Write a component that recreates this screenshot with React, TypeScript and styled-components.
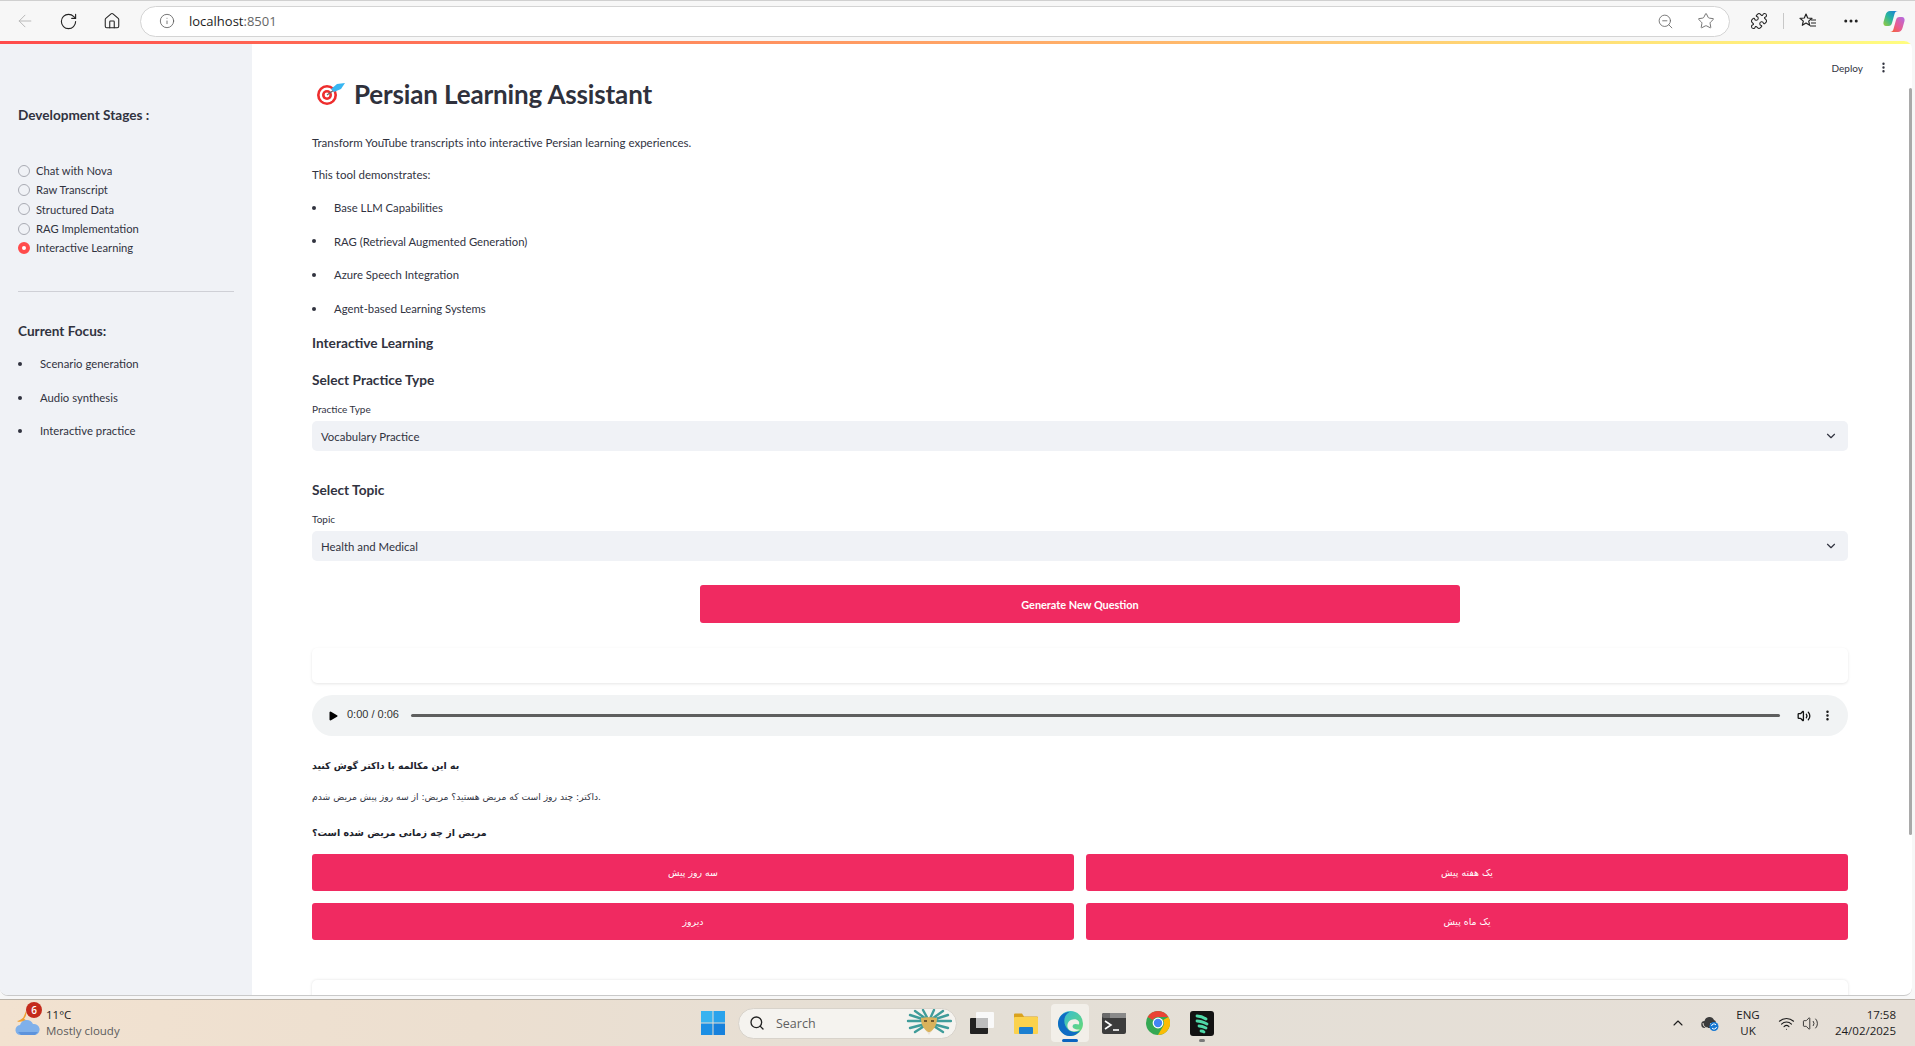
import React from 'react'
import styled, { createGlobalStyle } from 'styled-components'
import {
  ArrowLeft,
  RotateCw,
  Home,
  Info,
  ZoomOut,
  Star,
  Puzzle,
  MoreHorizontal,
  ChevronDown,
  ChevronUp,
  Search,
  Wifi,
  Volume2,
  Play,
  MoreVertical,
} from 'lucide-react'

const uiFont = `Lato, "Noto Sans", sans-serif`
const winFont = `"Open Sans", "Noto Sans", sans-serif`
const faFont = `"DejaVu Sans", "Noto Sans", sans-serif`
const pink = '#f02a61'

const Global = createGlobalStyle`
  html, body { margin: 0; padding: 0; height: 100%; overflow: hidden; }
  body { font-family: ${uiFont}; background: #f7f7f7; }
  * { box-sizing: border-box; }
`

const Page = styled.div`
  width: 1915px;
  height: 1046px;
  display: flex;
  flex-direction: column;
  overflow: hidden;
  background: #f7f7f7;
`

const Chrome = styled.div`
  height: 41px;
  flex: none;
  display: flex;
  align-items: center;
  border-top: 1px solid #d0d0d0;
  padding-left: 15px;
  color: #222;
`

const NavBtn = styled.div<{ $w?: number; $left?: number }>`
  width: ${(p) => p.$w || 44}px;
  margin-left: ${(p) => p.$left || 0}px;
  display: flex;
  align-items: center;
  justify-content: flex-start;
  flex: none;
`

const Address = styled.div`
  width: 1590px;
  height: 31px;
  flex: none;
  display: flex;
  align-items: center;
  background: #fff;
  border: 1px solid #d4d4d4;
  border-radius: 16px;
  padding: 0 14px 0 18px;
  font-family: ${winFont};
  font-size: 13px;
`

const Host = styled.span`
  margin-left: 14px;
  color: #1c1c1c;
  b { font-weight: 400; color: #666; }
`

const AddressEnd = styled.div`
  margin-left: auto;
  display: flex;
  gap: 23px;
  align-items: center;
  color: #666;
`

const ToolGroup = styled.div`
  display: flex;
  align-items: center;
  margin-left: 20px;
  flex: 1;
`

const ToolSep = styled.div`
  width: 1px;
  height: 16px;
  background: #c8c8c8;
  margin: 0 15px 0 15px;
`

const Viewport = styled.div`
  flex: none;
  height: 955px;
  margin-right: 3px;
  position: relative;
  background: #fff;
  border-radius: 0 8px 8px 8px;
  border-bottom: 1px solid #c9c9c9;
  overflow: hidden;
  display: flex;
  flex-direction: column;
`

const Decoration = styled.div`
  height: 3px;
  flex: none;
  background: linear-gradient(90deg, #ff4b4b, #fffd80);
`

const Body = styled.div`
  flex: 1;
  min-height: 0;
  display: flex;
`

const Sidebar = styled.aside`
  width: 252px;
  flex: none;
  background: #f0f2f6;
  padding: 61px 18px 0 18px;
  color: #31333f;
`

const SideTitle = styled.div<{ $after: number }>`
  font-size: 13.6px;
  font-weight: 700;
  line-height: 20px;
  margin-bottom: ${(p) => p.$after}px;
`

const RadioList = styled.div`
  display: flex;
  flex-direction: column;
`

const RadioRow = styled.div`
  height: 19.3px;
  display: flex;
  align-items: center;
  gap: 6px;
  font-size: 11.2px;
`

const RadioDot = styled.span<{ $on?: boolean }>`
  width: 12px;
  height: 12px;
  border-radius: 50%;
  flex: none;
  background: ${(p) => (p.$on ? '#fff' : '#f0f2f6')};
  border: ${(p) => (p.$on ? '4px solid #ff4b4b' : '1px solid #a9abb3')};
`

const SideRule = styled.hr`
  border: 0;
  border-top: 1px solid #cfd0d6;
  margin: 34px 0 29px;
`

const SideList = styled.ul`
  list-style: none;
  margin: 0;
  padding: 0;
`

const Bullet = styled.li<{ $pad: number; $h: number }>`
  position: relative;
  padding-left: ${(p) => p.$pad}px;
  height: ${(p) => p.$h}px;
  line-height: ${(p) => p.$h}px;
  font-size: 11.3px;
  &::before {
    content: '';
    position: absolute;
    left: 0;
    top: 50%;
    width: 4px;
    height: 4px;
    margin-top: -2px;
    background: #31333f;
    border-radius: 50%;
  }
`

const Main = styled.main`
  flex: 1;
  min-width: 0;
  position: relative;
  padding: 0 64px 0 60px;
  color: #31333f;
  overflow: hidden;
`

const Header = styled.div`
  position: absolute;
  top: 17px;
  right: 22px;
  display: flex;
  align-items: center;
  gap: 14px;
  font-size: 10px;
  color: #31333f;
`

const ScrollThumb = styled.div`
  position: absolute;
  right: 0;
  top: 44px;
  width: 3px;
  height: 747px;
  background: #a9a9a9;
  border-radius: 2px;
`

const TitleRow = styled.div`
  display: flex;
  align-items: center;
  gap: 9px;
  height: 32px;
  margin-top: 34px;
  padding-left: 5px;
`

const Title = styled.h1`
  margin: 0;
  font-size: 26px;
  font-weight: 700;
  line-height: 32px;
  letter-spacing: -0.15px;
  color: #2f313c;
`

const Para = styled.p<{ $top: number }>`
  margin: ${(p) => p.$top}px 0 0;
  font-size: 11.5px;
  line-height: 18px;
`

const MainList = styled.ul`
  list-style: none;
  margin: 7px 0 0;
  padding: 0;
`

const H3 = styled.h3<{ $top: number }>`
  margin: ${(p) => p.$top}px 0 0;
  font-size: 13.7px;
  font-weight: 700;
  line-height: 20px;
`

const FieldLabel = styled.div<{ $top: number }>`
  margin-top: ${(p) => p.$top}px;
  font-size: 10px;
  line-height: 13px;
  color: #31333f;
`

const Select = styled.div`
  height: 30px;
  margin-top: 5px;
  background: #f0f2f6;
  border-radius: 5px;
  padding: 0 10px 0 9px;
  display: flex;
  align-items: center;
  justify-content: space-between;
  font-size: 11.4px;
`

const CenterRow = styled.div`
  display: flex;
  justify-content: center;
  margin-top: 24px;
`

const PrimaryBtn = styled.div`
  width: 760px;
  height: 38px;
  background: ${pink};
  color: #fff;
  border-radius: 3px;
  display: flex;
  align-items: center;
  justify-content: center;
  font-size: 10.9px;
  font-weight: 700;
`

const Card = styled.div<{ $top: number }>`
  height: 35px;
  margin-top: ${(p) => p.$top}px;
  background: #fff;
  border-radius: 5px;
  box-shadow: 0 1px 3px rgba(0, 0, 0, 0.1);
`

const Audio = styled.div`
  height: 41px;
  margin-top: 12px;
  background: #f1f3f4;
  border-radius: 21px;
  display: flex;
  align-items: center;
  padding: 0 14px 0 15px;
  color: #111;
`

const AudioTime = styled.span`
  font-family: "Liberation Sans", sans-serif;
  font-size: 11px;
  color: #333;
  margin: 0 12px 3px 8px;
  white-space: nowrap;
`

const Track = styled.div`
  flex: 1;
  height: 3px;
  background: #5e5e5e;
  border-radius: 2px;
  margin: 0 17px 1px 0;
`

const FaLine = styled.p<{ $top: number; $bold?: boolean; $size: number }>`
  direction: ltr;
  margin: ${(p) => p.$top}px 0 0;
  font-family: ${faFont};
  font-size: ${(p) => p.$size}px;
  font-weight: ${(p) => (p.$bold ? 700 : 400)};
  line-height: 18px;
  color: ${(p) => (p.$bold ? '#20222c' : '#31333f')};
`

const Answers = styled.div`
  display: grid;
  grid-template-columns: 1fr 1fr;
  gap: 12px;
  margin-top: 12px;
`

const AnswerBtn = styled.div`
  height: 37px;
  background: ${pink};
  color: #fff;
  border-radius: 3px;
  display: flex;
  align-items: center;
  justify-content: center;
  font-family: ${faFont};
  font-size: 9.4px;
`

const CutCard = styled.div`
  height: 40px;
  margin-top: 40px;
  background: #fff;
  border-radius: 5px 5px 0 0;
  box-shadow: 0 0 3px rgba(0, 0, 0, 0.12);
`

const Taskbar = styled.footer`
  flex: none;
  height: 47px;
  margin-top: 3px;
  border-top: 1px solid #b9b2a8;
  background: linear-gradient(90deg, #f2e2d0 0%, #ecdfd0 25%, #e4dfd6 50%, #e6dfd7 100%);
  display: flex;
  align-items: center;
  font-family: ${winFont};
  color: #1c1c1c;
`

const WeatherBox = styled.div`
  width: 701px;
  flex: none;
  padding-left: 15px;
  display: flex;
  align-items: center;
  gap: 6px;
  position: relative;
`

const Badge = styled.span`
  position: absolute;
  left: 26px;
  top: -5px;
  width: 16px;
  height: 16px;
  border-radius: 50%;
  background: #c42b1c;
  color: #fff;
  font-size: 10px;
  font-weight: 600;
  display: flex;
  align-items: center;
  justify-content: center;
`

const WeatherText = styled.div`
  font-size: 11.5px;
  line-height: 16.5px;
  span { display: block; color: #5c5c5c; }
`

const Center = styled.div`
  display: flex;
  align-items: center;
`

const SearchPill = styled.div`
  width: 219px;
  height: 31px;
  margin: 0 3px 0 13px;
  background: #f5f3ef;
  border: 1px solid #d8d3cb;
  border-radius: 16px;
  display: flex;
  align-items: center;
  gap: 11px;
  padding: 0 4px 0 10px;
  font-size: 12.5px;
  color: #5f5f5f;
`

const Mask = styled.span`
  margin-left: auto;
  display: flex;
`

const TaskIcon = styled.div<{ $active?: boolean; $mark?: string }>`
  width: 38px;
  height: 38px;
  margin: 0 3px;
  border-radius: 4px;
  display: flex;
  align-items: center;
  justify-content: center;
  position: relative;
  background: ${(p) => (p.$active ? '#f2efe9' : 'transparent')};
  ${(p) =>
    p.$mark
      ? `&::after {
    content: '';
    position: absolute;
    bottom: 0;
    left: 50%;
    width: ${p.$active ? 16 : 6}px;
    height: 3px;
    margin-left: -${p.$active ? 8 : 3}px;
    border-radius: 2px;
    background: ${p.$mark};
  }`
      : ''}
`

const Tray = styled.div`
  margin-left: auto;
  padding-right: 19px;
  display: flex;
  align-items: center;
  font-size: 11.5px;
`

const Lang = styled.div`
  width: 30px;
  margin: 0 15px 0 14px;
  text-align: center;
  line-height: 16px;
`

const Clock = styled.div`
  margin-left: 15px;
  width: 62px;
  text-align: right;
  line-height: 16.5px;
  white-space: nowrap;
`

const stages = ['Chat with Nova', 'Raw Transcript', 'Structured Data', 'RAG Implementation', 'Interactive Learning']
const focus = ['Scenario generation', 'Audio synthesis', 'Interactive practice']
const demos = ['Base LLM Capabilities', 'RAG (Retrieval Augmented Generation)', 'Azure Speech Integration', 'Agent-based Learning Systems']
const answers = ['سه روز پیش', 'یک هفته پیش', 'دیروز', 'یک ماه پیش']

const TargetIcon = () => (
  <svg width="28" height="22" viewBox="0 0 28 22">
    <circle cx="10" cy="12" r="10" fill="#ee2d2d" />
    <circle cx="10" cy="12" r="7.400" fill="#fff" />
    <circle cx="10" cy="12" r="5" fill="#ee2d2d" />
    <circle cx="10" cy="12" r="2.400" fill="#fff" />
    <path d="M10 12 L17 7" stroke="#666" strokeWidth="1.200" />
    <path d="M14 6 L20 1 L28 0 L24 6 L17 9 Z" fill="#38b6f2" />
  </svg>
)

const FavIcon = () => (
  <svg width="18" height="18" viewBox="0 0 18 18" fill="none" stroke="#222" strokeWidth="1.2">
    <path d="M7 2l1.7 4 4.3.3-3.3 2.8 1 4.2L7 11l-3.7 2.3 1-4.2L1 6.3 5.3 6z" strokeLinejoin="round" />
    <path d="M12 8h5M12 11h5M11 14h6" />
  </svg>
)

const CopilotIcon = () => (
  <svg width="22" height="21" viewBox="0 0 22 21">
    <defs>
      <linearGradient id="cpA" x1="0" y1="1" x2="1" y2="0">
        <stop offset="0" stopColor="#9ccb3b" />
        <stop offset="0.5" stopColor="#27b5a0" />
        <stop offset="1" stopColor="#1b76e0" />
      </linearGradient>
      <linearGradient id="cpB" x1="1" y1="0" x2="0" y2="1">
        <stop offset="0" stopColor="#b26be6" />
        <stop offset="0.55" stopColor="#ea5d8f" />
        <stop offset="1" stopColor="#f4622c" />
      </linearGradient>
    </defs>
    <path d="M7 0h8c-2 0-3 1-3.500 3L9 12c-.5 2-1.500 3-3.500 3H3c-2 0-3-2-2.500-4L2.500 4C3.200 1.500 5 0 7 0z" fill="url(#cpA)" />
    <path d="M15 21H7c2 0 3-1 3.500-3L13 9c.5-2 1.500-3 3.500-3H19c2 0 3 2 2.500 4l-2 7c-.7 2.500-2.500 4-4.500 4z" fill="url(#cpB)" />
  </svg>
)

const WeatherIcon = () => (
  <svg width="25" height="26" viewBox="0 0 25 26">
    <path d="M11 1a8 8 0 0 1-9 10l5-1 2-4z" fill="#f0a030" />
    <path d="M2 12l6-4 4 3z" fill="#f0a030" />
    <path d="M6 25a5 5 0 0 1-1-10 7 7 0 0 1 13-1 5.500 5.500 0 0 1 2 11z" fill="#7fb0ea" />
    <path d="M3 22h20l-3 3H6z" fill="#5d93dc" />
  </svg>
)

const WindowsIcon = () => (
  <svg width="24" height="24" viewBox="0 0 24 24">
    <rect x="0" y="0" width="11.500" height="11.500" fill="#38b3f0" />
    <rect x="12.500" y="0" width="11.500" height="11.500" fill="#2aa3ec" />
    <rect x="0" y="12.500" width="11.500" height="11.500" fill="#1c8fe4" />
    <rect x="12.500" y="12.500" width="11.500" height="11.500" fill="#1781dc" />
  </svg>
)

const MaskIcon = () => (
  <svg width="46" height="28" viewBox="0 0 46 28">
    <g stroke="#3f9c9a" strokeWidth="2.400" strokeLinecap="round">
      <path d="M23 12L2 12M23 12L4 6M23 12L9 2M23 12L17 1M23 12L28 1M23 12L37 2M23 12L42 6M23 12L45 12M23 14L4 19M23 14L42 19M23 14L9 23M23 14L37 23" />
    </g>
    <path d="M15 9c3-1 13-1 16 0 0 6-2 11-8 15-6-4-8-9-8-15z" fill="#d9b25c" />
    <path d="M18 12h3M25 12h3" stroke="#4a3820" strokeWidth="1.500" />
    <path d="M20 21c2 3 4 3 6 0l-3 5z" fill="#e8e0d8" />
  </svg>
)

const TaskViewIcon = () => (
  <svg width="24" height="22" viewBox="0 0 24 22">
    <rect x="0" y="6" width="18" height="16" rx="1" fill="#222" />
    <rect x="6" y="0" width="18" height="16" rx="1" fill="#f9f9f9" />
    <rect x="6" y="6" width="12" height="10" fill="#bdbdbd" />
  </svg>
)

const FilesIcon = () => (
  <svg width="24" height="21" viewBox="0 0 24 21">
    <path d="M0 1.500a1 1 0 0 1 1-1h7l2 3h13a1 1 0 0 1 1 1V8H0z" fill="#d9a21f" />
    <rect x="0" y="4" width="24" height="17" rx="1" fill="#fbd24d" />
    <rect x="5" y="14" width="14" height="7" rx="1" fill="#1b7fd0" />
  </svg>
)

const EdgeIcon = () => (
  <svg width="25" height="25" viewBox="0 0 24 24">
    <defs>
      <linearGradient id="edA" x1="0" y1="0" x2="1" y2="1">
        <stop offset="0" stopColor="#2fb8e0" />
        <stop offset="1" stopColor="#6ede6a" />
      </linearGradient>
    </defs>
    <circle cx="12" cy="12" r="12" fill="url(#edA)" />
    <path d="M0 12C0 6 5 1 11 1 6 4 5 9 7 14c2 5 8 8 14 5-3 4-6 5-10 5C5 24 0 18 0 12z" fill="#0f6cc4" />
    <path d="M9 14c0-4 4-7 8-6 3 1 4 3 3 5-3-1-6-1-6 2 0 2 3 3 7 3-5 3-12 2-12-4z" fill="#f2efe9" />
  </svg>
)

const TerminalIcon = () => (
  <svg width="24" height="21" viewBox="0 0 24 21">
    <rect x="0" y="0" width="24" height="21" rx="2" fill="#3c3c3c" />
    <rect x="0" y="0" width="24" height="5" rx="2" fill="#6a6a6a" />
    <rect x="8" y="0" width="16" height="5" fill="#8a8a8a" />
    <path d="M3 8l6 4-6 4" stroke="#fff" strokeWidth="1.600" fill="none" />
    <path d="M11 17h6" stroke="#fff" strokeWidth="1.600" />
  </svg>
)

const ChromeIcon = () => (
  <svg width="24" height="24" viewBox="0 0 24 24">
    <circle cx="12" cy="12" r="12" fill="#34a853" />
    <path d="M12 0a12 12 0 0 1 10.400 6H12a6 6 0 0 0-5.200 3L1.600 6A12 12 0 0 1 12 0z" fill="#ea4335" />
    <path d="M22.400 6a12 12 0 0 1-10.400 18l5.200-9a6 6 0 0 0 0-6z" fill="#fbbc05" />
    <circle cx="12" cy="12" r="5.400" fill="#fff" />
    <circle cx="12" cy="12" r="4.200" fill="#4285f4" />
  </svg>
)

const AppIcon = () => (
  <svg width="24" height="25" viewBox="0 0 24 25">
    <rect width="24" height="25" rx="3" fill="#121212" />
    <g stroke="#4fd8a8" strokeWidth="2.800" fill="none" strokeLinecap="round">
      <path d="M7 5c3 0 6 1 9 3" />
      <path d="M7 10c3 0 6 1 10 3" />
      <path d="M9 15c3 0 5 1 7 2" />
      <path d="M11 20c1 0 2 0 3 1" />
    </g>
  </svg>
)

const CloudSyncIcon = () => (
  <svg width="18" height="16" viewBox="0 0 18 16">
    <path d="M4 13a3.500 3.500 0 0 1-.5-7A5 5 0 0 1 13 5a3 3 0 0 1 2 3H9v5z" fill="#3c3c3c" />
    <path d="M2 8c0 3 2 5 5 5" stroke="#e4dfd6" strokeWidth="1" fill="none" />
    <circle cx="13" cy="11.500" r="4.500" fill="#1778d2" />
    <path d="M10.500 11a2.500 2.500 0 0 1 4.500-1M15.500 12a2.500 2.500 0 0 1-4.500 1" stroke="#fff" strokeWidth="1" fill="none" />
  </svg>
)

const App = () => (
  <Page>
    <Global />
    <Chrome>
      <NavBtn $w={44}><ArrowLeft size={20} strokeWidth={1.2} color="#b9b9b9" /></NavBtn>
      <NavBtn $w={44}><RotateCw size={19} strokeWidth={1.4} /></NavBtn>
      <NavBtn $w={37}><Home size={18} strokeWidth={1.4} /></NavBtn>
      <Address>
        <Info size={16} strokeWidth={1.2} color="#555" />
        <Host>localhost<b>:8501</b></Host>
        <AddressEnd>
          <ZoomOut size={17} strokeWidth={1.2} />
          <Star size={18} strokeWidth={1.2} />
        </AddressEnd>
      </Address>
      <ToolGroup>
        <Puzzle size={18} strokeWidth={1.4} />
        <ToolSep />
        <FavIcon />
        <NavBtn $w={41} $left={25}><MoreHorizontal size={18} strokeWidth={2} /></NavBtn>
        <CopilotIcon />
      </ToolGroup>
    </Chrome>
    <Viewport>
      <Decoration />
      <Body>
        <Sidebar>
          <SideTitle $after={36}>Development Stages :</SideTitle>
          <RadioList>
            {stages.map((s, i) => (
              <RadioRow key={s}>
                <RadioDot $on={i === 4} />
                {s}
              </RadioRow>
            ))}
          </RadioList>
          <SideRule />
          <SideTitle $after={6}>Current Focus:</SideTitle>
          <SideList>
            {focus.map((f) => (
              <Bullet key={f} $pad={22} $h={33.500}>{f}</Bullet>
            ))}
          </SideList>
        </Sidebar>
        <Main>
          <Header>
            Deploy
            <MoreVertical size={13} strokeWidth={2.4} />
          </Header>
          <ScrollThumb />
          <TitleRow>
            <TargetIcon />
            <Title>Persian Learning Assistant</Title>
          </TitleRow>
          <Para $top={24}>Transform YouTube transcripts into interactive Persian learning experiences.</Para>
          <Para $top={14}>This tool demonstrates:</Para>
          <MainList>
            {demos.map((d) => (
              <Bullet key={d} $pad={22} $h={33.600}>{d}</Bullet>
            ))}
          </MainList>
          <H3 $top={8}>Interactive Learning</H3>
          <H3 $top={17}>Select Practice Type</H3>
          <FieldLabel $top={13}>Practice Type</FieldLabel>
          <Select>
            Vocabulary Practice
            <ChevronDown size={14} strokeWidth={2} />
          </Select>
          <H3 $top={29}>Select Topic</H3>
          <FieldLabel $top={13}>Topic</FieldLabel>
          <Select>
            Health and Medical
            <ChevronDown size={14} strokeWidth={2} />
          </Select>
          <CenterRow>
            <PrimaryBtn>Generate New Question</PrimaryBtn>
          </CenterRow>
          <Card $top={25} />
          <Audio>
            <Play size={12} fill="#000" strokeWidth={0} />
            <AudioTime>0:00 / 0:06</AudioTime>
            <Track />
            <Volume2 size={14} strokeWidth={2.2} />
            <NavBtn $w={13} $left={10}><MoreVertical size={13} strokeWidth={2.6} /></NavBtn>
          </Audio>
          <FaLine $top={21} $bold $size={9.4}>به این مکالمه با داکتر گوش کنید</FaLine>
          <FaLine $top={13} $size={9.2}>داکتر: چند روز است که مریض هستید؟ مریض: از سه روز پیش مریض شدم.</FaLine>
          <FaLine $top={18} $bold $size={9.5}>مریض از چه زمانی مریض شده است؟</FaLine>
          <Answers>
            {answers.map((a) => (
              <AnswerBtn key={a}>{a}</AnswerBtn>
            ))}
          </Answers>
          <CutCard />
        </Main>
      </Body>
    </Viewport>
    <Taskbar>
      <WeatherBox>
        <WeatherIcon />
        <Badge>6</Badge>
        <WeatherText>
          11°C
          <span>Mostly cloudy</span>
        </WeatherText>
      </WeatherBox>
      <Center>
        <WindowsIcon />
        <SearchPill>
          <Search size={16} strokeWidth={2} color="#222" />
          Search
          <Mask><MaskIcon /></Mask>
        </SearchPill>
        <TaskIcon><TaskViewIcon /></TaskIcon>
        <TaskIcon><FilesIcon /></TaskIcon>
        <TaskIcon $active $mark="#0a64c0"><EdgeIcon /></TaskIcon>
        <TaskIcon><TerminalIcon /></TaskIcon>
        <TaskIcon><ChromeIcon /></TaskIcon>
        <TaskIcon $mark="#7a7a7a"><AppIcon /></TaskIcon>
      </Center>
      <Tray>
        <NavBtn $w={31}><ChevronUp size={16} strokeWidth={1.6} /></NavBtn>
        <CloudSyncIcon />
        <Lang>ENG<br />UK</Lang>
        <NavBtn $w={24}><Wifi size={17} strokeWidth={1.5} /></NavBtn>
        <Volume2 size={17} strokeWidth={1.2} />
        <Clock>17:58<br />24/02/2025</Clock>
      </Tray>
    </Taskbar>
  </Page>
)

export default App
